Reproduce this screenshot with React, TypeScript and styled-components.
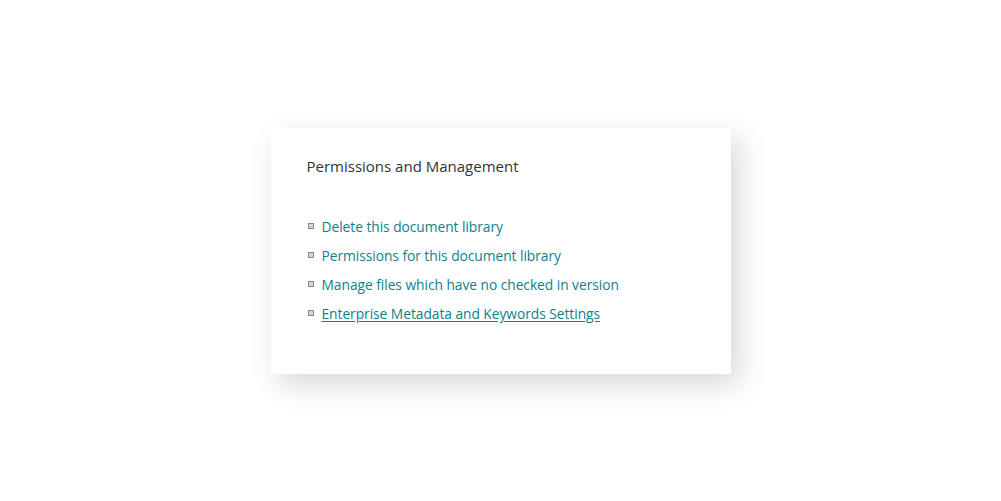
import React from 'react';
import styled, { createGlobalStyle } from 'styled-components';

const GlobalStyle = createGlobalStyle`
  html, body {
    margin: 0;
    padding: 0;
    background: #ffffff;
  }
`;

const Page = styled.div`
  width: 100%;
  height: 100vh;
  display: flex;
  align-items: center;
  justify-content: center;
  font-family: 'Open Sans', 'Noto Sans', 'Liberation Sans', sans-serif;
`;

const Card = styled.section`
  box-sizing: border-box;
  width: 460px;
  height: 246px;
  padding: 27px 36px 0 36px;
  background: #ffffff;
  box-shadow: 8px 10px 28px rgba(0, 0, 0, 0.16);
`;

const Title = styled.h2`
  margin: 0;
  font-size: 15px;
  font-weight: 400;
  line-height: 22px;
  color: #333333;
`;

const LinkList = styled.ul`
  list-style: none;
  margin: 39px 0 0 0;
  padding: 0;
  display: flex;
  flex-direction: column;
  gap: 8px;
`;

const Item = styled.li`
  display: flex;
  align-items: center;
  gap: 8px;
  height: 21px;
  padding-left: 1px;
`;

const Bullet = styled.span`
  box-sizing: border-box;
  width: 6px;
  height: 6px;
  border: 1px solid #8a8a8a;
  background: #d4d4d4;
  flex-shrink: 0;
`;

const LinkText = styled.a<{ $underline?: boolean }>`
  font-size: 13.8px;
  letter-spacing: -0.05px;
  line-height: 21px;
  color: #11808a;
  text-decoration: ${(p) => (p.$underline ? 'underline' : 'none')};
  text-underline-offset: 2px;
  cursor: pointer;
`;

const links = [
  { label: 'Delete this document library' },
  { label: 'Permissions for this document library' },
  { label: 'Manage files which have no checked in version' },
  { label: 'Enterprise Metadata and Keywords Settings', underline: true },
];

export default function App() {
  return (
    <>
      <GlobalStyle />
      <Page>
        <Card>
          <Title>Permissions and Management</Title>
          <LinkList>
            {links.map((l) => (
              <Item key={l.label}>
                <Bullet />
                <LinkText $underline={l.underline}>{l.label}</LinkText>
              </Item>
            ))}
          </LinkList>
        </Card>
      </Page>
    </>
  );
}
